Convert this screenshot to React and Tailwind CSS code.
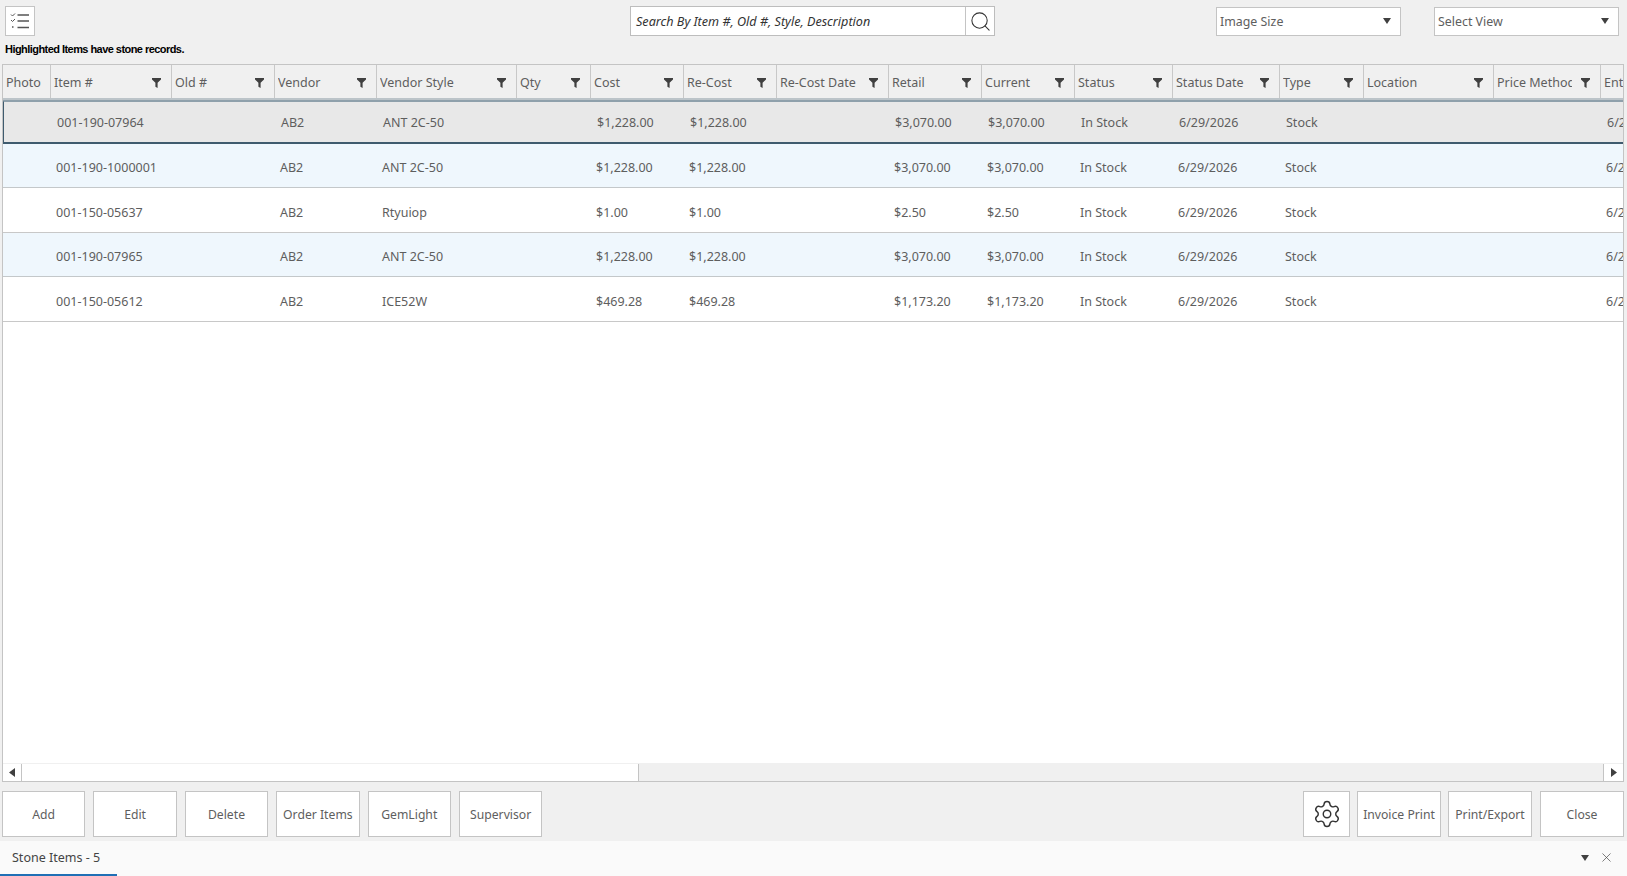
import React from "react";
import { Search, Settings, X } from "lucide-react";

const cols = [
  { label: "Photo", w: "w-[48px]", filter: false },
  { label: "Item #", w: "w-[121px]", filter: true },
  { label: "Old #", w: "w-[103px]", filter: true },
  { label: "Vendor", w: "w-[102px]", filter: true },
  { label: "Vendor Style", w: "w-[140px]", filter: true },
  { label: "Qty", w: "w-[74px]", filter: true },
  { label: "Cost", w: "w-[93px]", filter: true },
  { label: "Re-Cost", w: "w-[93px]", filter: true },
  { label: "Re-Cost Date", w: "w-[112px]", filter: true },
  { label: "Retail", w: "w-[93px]", filter: true },
  { label: "Current", w: "w-[93px]", filter: true },
  { label: "Status", w: "w-[98px]", filter: true },
  { label: "Status Date", w: "w-[107px]", filter: true },
  { label: "Type", w: "w-[84px]", filter: true },
  { label: "Location", w: "w-[130px]", filter: true },
  { label: "Price Method", w: "w-[107px]", filter: true, tight: true },
  { label: "Ent", w: "w-[60px]", filter: false },
];

const rows = [
  ["", "001-190-07964", "", "AB2", "ANT 2C-50", "", "$1,228.00", "$1,228.00", "", "$3,070.00", "$3,070.00", "In Stock", "6/29/2026", "Stock", "", "", "6/29/2026"],
  ["", "001-190-1000001", "", "AB2", "ANT 2C-50", "", "$1,228.00", "$1,228.00", "", "$3,070.00", "$3,070.00", "In Stock", "6/29/2026", "Stock", "", "", "6/29/2026"],
  ["", "001-150-05637", "", "AB2", "Rtyuiop", "", "$1.00", "$1.00", "", "$2.50", "$2.50", "In Stock", "6/29/2026", "Stock", "", "", "6/29/2026"],
  ["", "001-190-07965", "", "AB2", "ANT 2C-50", "", "$1,228.00", "$1,228.00", "", "$3,070.00", "$3,070.00", "In Stock", "6/29/2026", "Stock", "", "", "6/29/2026"],
  ["", "001-150-05612", "", "AB2", "ICE52W", "", "$469.28", "$469.28", "", "$1,173.20", "$1,173.20", "In Stock", "6/29/2026", "Stock", "", "", "6/29/2026"],
];

const rowStyles = [
  "h-[43.5px] pt-[3px] bg-[#e8e8e8] border-2 border-[#3f5b6e] border-t-[#8fa0ab] -ml-px",
  "h-[44.6px] pt-[6px] bg-[#eff7fd] border-b border-[#c4c8ca]",
  "h-[44.6px] pt-[6px] bg-white border-b border-[#c8c8c8]",
  "h-[44.6px] pt-[6px] bg-[#eff7fd] border-b border-[#c4c8ca]",
  "h-[44.6px] pt-[6px] bg-white border-b border-[#c8c8c8]",
];

function Funnel() {
  return (
    <svg width="9" height="10" viewBox="0 0 9 10" className="shrink-0">
      <path d="M0 0H9V1.6L5.6 4.8V10L3.4 8.8V4.8L0 1.6Z" fill="#404040" />
    </svg>
  );
}

function Caret({ dir = "down", cls = "" }) {
  const d = { down: "M0 0H8L4 6Z", left: "M6 0V9L0 4.5Z", right: "M0 0V9L6 4.5Z" }[dir];
  return (
    <svg width={dir === "down" ? 8 : 6} height={dir === "down" ? 6 : 9} viewBox={dir === "down" ? "0 0 8 6" : "0 0 6 9"} className={"shrink-0 " + cls}>
      <path d={d} fill="#404040" />
    </svg>
  );
}

function ChecklistIcon() {
  return (
    <svg width="20" height="17" viewBox="0 0 20 17" fill="none" stroke="#555" strokeWidth="1">
      <path d="M1 1.5L2.5 3L5 0.5" />
      <path d="M1 7L2.5 8.5L5 6" />
      <path d="M2 14H3.5" strokeWidth="1.5" />
      <path d="M7.5 2H19M7.5 8H19M7.5 14.5H19" strokeWidth="1.3" />
    </svg>
  );
}

function Btn({ w, icon, children }) {
  return (
    <button className={"h-[46px] bg-white border border-[#c4c4c4] text-[#5e5e5e] text-[12.2px] flex items-center justify-center shrink-0 " + (icon ? "" : "pt-[3px] ") + w}>
      {children}
    </button>
  );
}

function Select({ label, cls }) {
  return (
    <div className={"h-[29px] w-[185px] bg-white border border-[#c4c4c4] flex items-center justify-between pl-[3px] pr-[9px] text-[12.4px] text-[#5e5e5e] " + cls}>
      <span className="pt-[2px]">{label}</span>
      <Caret />
    </div>
  );
}

export default function App() {
  return (
    <div className="w-[1627px] h-[876px] overflow-hidden flex flex-col bg-[#f0f0f0] font-['Noto_Sans',sans-serif]">
      <div className="h-[64px] shrink-0 flex flex-col pl-[5px] pt-[6px]">
        <div className="flex items-center h-[30px]">
          <button className="w-[30px] h-[30px] bg-white border border-[#c4c4c4] flex items-center justify-center">
            <ChecklistIcon />
          </button>
          <div className="ml-[595px] w-[365px] h-[30px] bg-white border border-[#bdbdbd] flex">
            <div className="flex-1 flex items-center pl-[5px] pt-[2px] text-[12.6px] italic text-[#333]">
              Search By Item #, Old #, Style, Description
            </div>
            <div className="w-[29px] border-l border-[#c4c4c4] flex items-center justify-center">
              <Search size={23} strokeWidth={1.1} color="#333" />
            </div>
          </div>
          <Select label="Image Size" cls="ml-[221px]" />
          <Select label="Select View" cls="ml-[33px]" />
        </div>
        <div className="mt-[6px] text-[11px] font-bold text-black leading-[14px] tracking-[-0.55px] font-['Liberation_Sans',sans-serif]">
          Highlighted Items have stone records.
        </div>
      </div>

      <div className="ml-[2px] w-[1622px] flex-1 min-h-0 flex flex-col border border-[#c4c4c4] bg-white overflow-hidden">
        <div className="flex shrink-0 h-[35px] bg-[#f0f0f0] border-b-2 border-[#bcc4c9] text-[12.5px] text-[#5e5e5e]">
          {cols.map((c, i) => (
            <div
              key={i}
              className={
                "shrink-0 flex items-center pl-[3px] pt-[3px] border-r border-[#c8c8c8] " +
                (c.filter ? "pr-[10px] " : "pr-0 ") +
                (c.tight ? "gap-[9px] " : "gap-[3px] ") +
                c.w
              }
            >
              <span className="flex-1 min-w-0 overflow-hidden whitespace-nowrap">{c.label}</span>
              {c.filter && <Funnel />}
            </div>
          ))}
        </div>
        <div className="flex-1 min-h-0 flex flex-col">
          {rows.map((r, ri) => (
            <div key={ri} className={"flex shrink-0 w-[1650px] items-center text-[12.5px] text-[#5e5e5e] " + rowStyles[ri]}>
              {r.map((v, ci) => (
                <div key={ci} className={"shrink-0 pl-[5px] whitespace-nowrap overflow-hidden " + cols[ci].w}>
                  {v}
                </div>
              ))}
            </div>
          ))}
        </div>
        <div className="h-[18px] shrink-0 flex bg-[#f0f0f0] border-t border-[#f0f0f0]">
          <div className="w-[19px] bg-white border-r border-[#c4c4c4] flex items-center justify-center">
            <Caret dir="left" />
          </div>
          <div className="w-[617px] bg-white border-r border-[#c4c4c4]" />
          <div className="flex-1" />
          <div className="w-[20px] bg-white border-l border-[#c4c4c4] flex items-center justify-center">
            <Caret dir="right" />
          </div>
        </div>
      </div>

      <div className="h-[59px] shrink-0 flex items-start justify-between pt-[9px] pl-[2px] pr-[3px]">
        <div className="flex gap-[8px]">
          <Btn w="w-[83.4px]">Add</Btn>
          <Btn w="w-[83.4px]">Edit</Btn>
          <Btn w="w-[83.4px]">Delete</Btn>
          <Btn w="w-[83.4px]">Order Items</Btn>
          <Btn w="w-[83.4px]">GemLight</Btn>
          <Btn w="w-[83.4px]">Supervisor</Btn>
        </div>
        <div className="flex gap-[7px]">
          <Btn icon w="w-[47px]"><Settings size={30} strokeWidth={1.15} color="#333" /></Btn>
          <Btn w="w-[84px]">Invoice Print</Btn>
          <Btn w="w-[84px]">Print/Export</Btn>
          <Btn w="w-[84px] ml-[1px]">Close</Btn>
        </div>
      </div>

      <div className="h-[35px] shrink-0 bg-[#fafafa] flex items-center justify-between relative pb-[2px] pl-[12px] pr-[13px] text-[12.5px] text-[#444]">
        <span className="pt-[2px]">Stone Items - 5</span>
        <div className="flex items-center gap-[10px]">
          <Caret />
          <X size={15} strokeWidth={1.1} color="#444" />
        </div>
        <div className="absolute left-0 bottom-0 w-[117px] h-[2px] bg-[#1f6fb5]" />
      </div>
    </div>
  );
}
